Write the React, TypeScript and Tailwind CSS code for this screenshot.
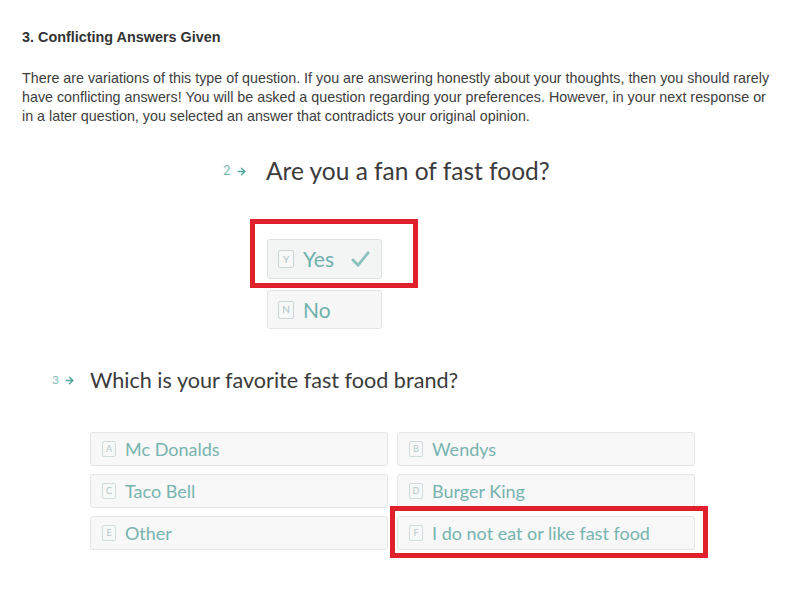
import { ArrowRight } from 'lucide-react';

const choices = [
  { key: 'A', label: 'Mc Donalds' },
  { key: 'B', label: 'Wendys' },
  { key: 'C', label: 'Taco Bell' },
  { key: 'D', label: 'Burger King' },
  { key: 'E', label: 'Other' },
  { key: 'F', label: 'I do not eat or like fast food' },
];

function KeyBox({ letter, big }: { letter: string; big?: boolean }) {
  return (
    <span
      className={
        big
          ? 'flex items-center justify-center w-[16px] h-[18px] border border-[#c9d6d5] rounded-[2px] text-[10px] text-[#aac3c1] bg-[#f7f9f9]'
          : 'flex items-center justify-center w-[14px] h-[16px] border border-[#cfdcdb] rounded-[2px] text-[9px] text-[#b2c9c7] bg-[#f7f9f9]'
      }
    >
      {letter}
    </span>
  );
}

function QNum({ n, size }: { n: number; size: string }) {
  return (
    <span className={`flex items-center gap-[5px] text-[#7fb8b3] ${size}`}>
      {n}
      <ArrowRight className="w-[11px] h-[11px] text-[#4fa59d]" strokeWidth={3.2} />
    </span>
  );
}

export default function App() {
  return (
    <div className="w-[802px] h-[614px] bg-white overflow-hidden">
      <div className="pl-[22px] pr-[4px] pt-[30px] font-['Liberation_Sans',Arial,sans-serif] text-[#333]">
        <h3 className="text-[14.4px] font-bold leading-[15px]">3. Conflicting Answers Given</h3>
        <p className="mt-[24px] text-[14.3px] leading-[19px] text-[#3d3d3d] whitespace-nowrap">
          There are variations of this type of question. If you are answering honestly about your thoughts, then you should rarely
          <br />
          have conflicting answers! You will be asked a question regarding your preferences. However, in your next response or
          <br />
          in a later question, you selected an answer that contradicts your original opinion.
        </p>
      </div>

      <div className="font-['Lato','Noto_Sans',sans-serif]">
        <div className="mt-[30px] ml-[223px] flex items-center">
          <div className="w-[43px]">
            <QNum n={2} size="text-[13px]" />
          </div>
          <h2 className="text-[24.5px] leading-[30px] text-[#3b3b3b]">Are you a fan of fast food?</h2>
        </div>

        <div className="relative ml-[267px] mt-[53px] w-[115px] flex flex-col gap-[11px]">
          <div className="h-[40px] flex items-center gap-[9px] pl-[10px] bg-[#f3f4f4] border border-[#dfe3e3] rounded-[3px]">
            <KeyBox letter="Y" big />
            <span className="text-[21px] text-[#6fb1ac]">Yes</span>
            <svg className="ml-[8px] w-[19px] h-[18px]" viewBox="0 0 20 18" fill="none">
              <path d="M2 10 L7.5 15.5 L18 2.5" stroke="#8cc3bf" strokeWidth="3" strokeLinecap="round" strokeLinejoin="round" />
            </svg>
          </div>
          <div className="h-[39px] flex items-center gap-[9px] pl-[10px] bg-[#f7f7f7] border border-[#e2e5e5] rounded-[3px]">
            <KeyBox letter="N" big />
            <span className="text-[21px] text-[#6fb1ac]">No</span>
          </div>
          <div className="absolute left-[-17px] top-[-20px] w-[168px] h-[69px] border-[5px] border-[#e0202a]" />
        </div>

        <div className="mt-[38px] ml-[52px] flex items-center">
          <div className="w-[38px]">
            <QNum n={3} size="text-[12px]" />
          </div>
          <h2 className="text-[21.6px] leading-[26px] text-[#3b3b3b]">Which is your favorite fast food brand?</h2>
        </div>

        <div className="relative ml-[90px] mt-[39px] w-[605px] grid grid-cols-2 gap-x-[9px] gap-y-[8px]">
          {choices.map((c) => (
            <div
              key={c.key}
              className="h-[34px] flex items-center gap-[9px] pl-[11px] bg-[#f8f8f8] border border-[#e3e6e6] rounded-[3px]"
            >
              <KeyBox letter={c.key} />
              <span className="text-[18px] text-[#76b4af]">{c.label}</span>
            </div>
          ))}
          <div className="absolute left-[300px] top-[74px] w-[318px] h-[52px] border-[5px] border-[#e0202a]" />
        </div>
      </div>
    </div>
  );
}
